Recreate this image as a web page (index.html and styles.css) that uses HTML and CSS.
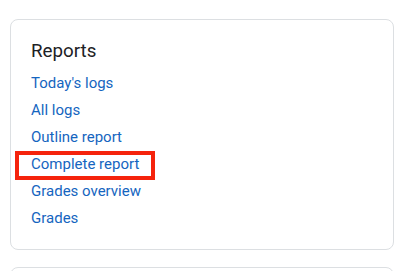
FILE: index.html
```html
<!DOCTYPE html>
<html lang="en">
<head>
    <meta charset="UTF-8">
    <meta name="viewport" content="width=device-width, initial-scale=1.0">
    <title>Reports</title>
    <link rel="stylesheet" href="styles.css">
</head>
<body>
    <section class="block">
        <h5 class="block-title">Reports</h5>
        <ul class="report-list">
            <li><a href="#">Today's logs</a></li>
            <li><a href="#">All logs</a></li>
            <li><a href="#">Outline report</a></li>
            <li><a href="#" class="marked">Complete report</a></li>
            <li><a href="#">Grades overview</a></li>
            <li><a href="#">Grades</a></li>
        </ul>
    </section>
    <section class="block"></section>
</body>
</html>
```

FILE: styles.css
```css
html {
    height: 100%;
    overflow: hidden;
}
body {
    font-family: Roboto, "Liberation Sans", sans-serif;
    margin: 0;
    padding: 19px 15px 0 10px;
    background: #fff;
    color: #1d2125;
}
.block {
    border: 1px solid #dcdfe2;
    border-radius: 8px;
    padding: 20px 20px 17px;
    margin-bottom: 17px;
    min-height: 40px;
}
.block-title {
    font-size: 18.75px;
    font-weight: 400;
    line-height: 1.2;
    margin: 0 0 7px;
}
.report-list {
    list-style: none;
    margin: 0;
    padding: 0;
}
.report-list li {
    font-size: 15px;
    line-height: 27px;
}
.report-list a {
    color: #1565c0;
    text-decoration: none;
}
.marked {
    position: relative;
}
.marked::after {
    content: "";
    position: absolute;
    top: -4px;
    bottom: -7px;
    left: -16px;
    right: -16px;
    border: 4px solid #f5230c;
}
```
